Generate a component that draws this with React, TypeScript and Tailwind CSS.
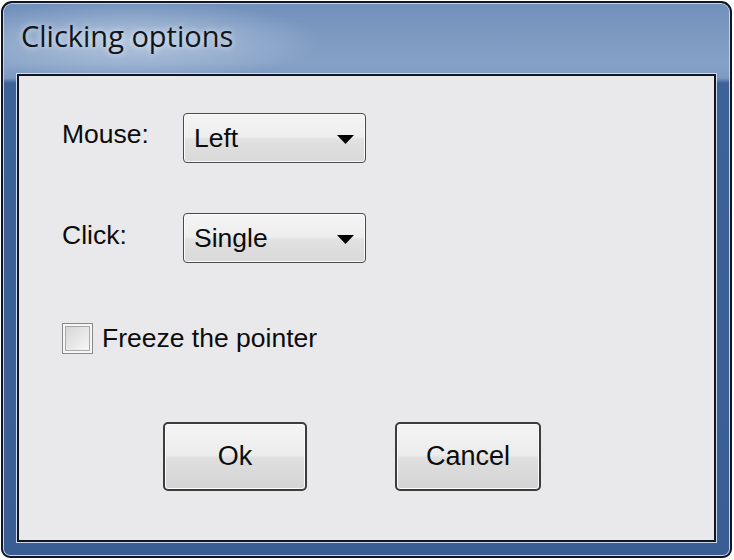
import { useState } from "react"

const font = "font-['Liberation_Sans',Arial,sans-serif]"

function Combo({ value }: { value: string }) {
  return (
    <div className="relative flex h-[50px] w-[183px] items-center rounded-[4px] border border-[#4a4a4a] bg-[linear-gradient(to_bottom,#f4f4f4_0%,#eeeeee_48%,#e2e2e2_52%,#d8d8d8_100%)] pl-[10px] shadow-[inset_0_0_0_1px_#fbfbfb]">
      <span className={`${font} text-[26.5px] leading-none text-[#0c0c0c]`}>{value}</span>
      <svg className="absolute right-[11px] top-[21px]" width="17" height="9" viewBox="0 0 17 9">
        <path d="M0 0 H17 L8.5 9 Z" fill="#000" />
      </svg>
    </div>
  )
}

function Button({ label, width }: { label: string; width: string }) {
  return (
    <button
      className={`${width} ${font} flex h-[69px] items-center justify-center rounded-[5px] border-2 border-[#3c3c3c] bg-[linear-gradient(to_bottom,#f4f4f4_0%,#ececec_48%,#dfdfdf_52%,#d4d4d4_100%)] text-[27px] text-[#0c0c0c] shadow-[inset_0_0_0_1px_#fafafa]`}
    >
      {label}
    </button>
  )
}

export default function App() {
  const [frozen, setFrozen] = useState(false)

  return (
    <div className="h-[560px] w-[734px] bg-white pl-[1px] pt-[1px]">
      <div className="flex h-[557px] w-[731px] flex-col rounded-t-[11px] rounded-b-[9px] border-2 border-[#111622] bg-[linear-gradient(to_bottom,#7190bb_0px,#86a1c6_60px,#7d9ac1_75px,#3d6297_80px,#3a5e93_100%)] shadow-[inset_0_0_0_1px_#c3d4ea]">
        <div className="flex h-[71px] items-center bg-[radial-gradient(ellipse_190px_40px_at_130px_38px,rgba(215,226,240,0.6),rgba(215,226,240,0)_100%)] pl-[18px] pb-[6px]">
          <span className="font-['Open_Sans',sans-serif] text-[29px] leading-none text-[#0f1620] [text-shadow:0_0_6px_rgba(255,255,255,0.8)]">
            Clicking options
          </span>
        </div>
        <div className="mx-[14px] mb-[14px] flex-1 border-2 border-[#10151f] bg-[#e9e9eb] pl-[43px] pt-[37px] shadow-[0_0_0_1px_#cddbee]">
          <div className="flex items-start">
            <span className={`${font} w-[121px] pt-[8px] text-[26.5px] leading-none text-[#0c0c0c]`}>Mouse:</span>
            <Combo value="Left" />
          </div>
          <div className="mt-[50px] flex items-start">
            <span className={`${font} w-[121px] pt-[9px] text-[26.5px] leading-none text-[#0c0c0c]`}>Click:</span>
            <Combo value="Single" />
          </div>
          <label className="mt-[60px] flex cursor-default items-center gap-[9px]" onClick={() => setFrozen(!frozen)}>
            <span className="flex h-[31px] w-[31px] items-center justify-center border border-[#8a8a8a] bg-[#f6f6f6] p-[2px]">
              <span className="h-full w-full border border-[#a9a9a9] bg-[linear-gradient(135deg,#d6d6d6,#f7f7f7)]">
                {frozen && <span className="block text-center text-[20px] leading-[24px]">✓</span>}
              </span>
            </span>
            <span className={`${font} text-[26.5px] leading-none text-[#0c0c0c]`}>Freeze the pointer</span>
          </label>
          <div className="ml-[101px] mt-[68px] flex gap-[88px]">
            <Button label="Ok" width="w-[144px]" />
            <Button label="Cancel" width="w-[146px]" />
          </div>
        </div>
      </div>
    </div>
  )
}
